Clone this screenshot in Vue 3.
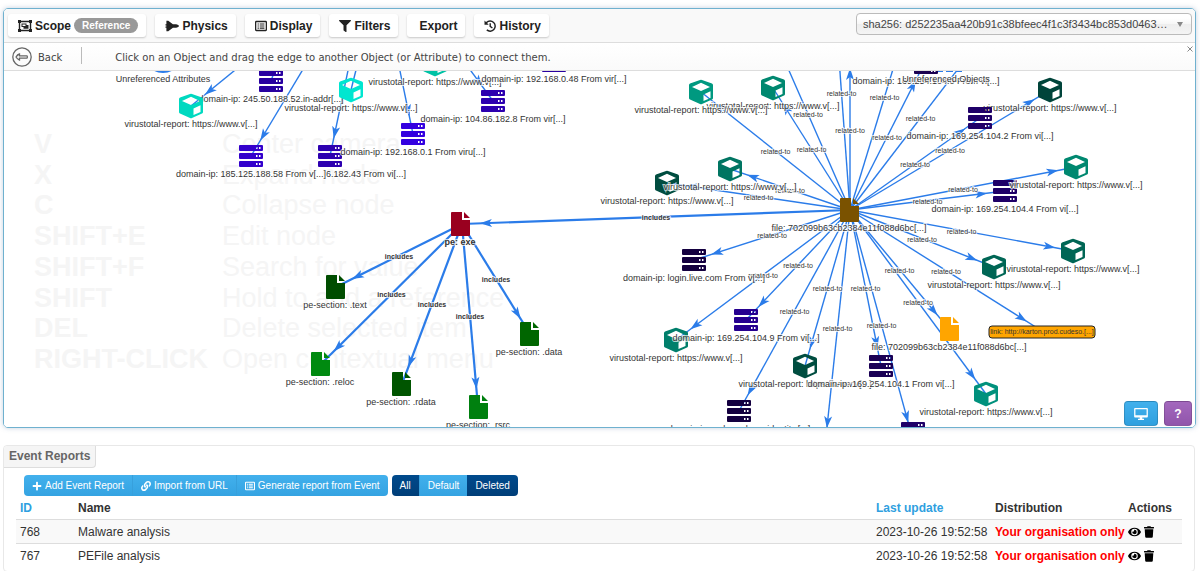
<template>
  <main class="page">
    <section class="graph-panel">
      <!-- Main toolbar -->
      <div class="toolbar">
        <div class="toolbar-menu">
          <button v-for="item in menu" :key="item.label" type="button" class="menu-btn" :class="{ 'no-icon': !item.icon }">
            <svg v-if="item.icon" class="menu-icon" :class="{ wide: item.wide }" :viewBox="icons[item.icon].box">
              <path :d="icons[item.icon].d" fill-rule="evenodd" />
            </svg>
            <span>{{ item.label }}</span>
            <span v-if="item.badge" class="badge">{{ item.badge }}</span>
          </button>
        </div>
        <div class="search">
          <select v-model="selected" class="search-select" aria-label="Search node">
            <option v-for="o in searchOptions" :key="o" :value="o">{{ o }}</option>
          </select>
          <span class="search-arrow"></span>
        </div>
      </div>

      <!-- Edit mode bar -->
      <div class="edit-bar">
        <button type="button" class="back-btn">
          <svg class="back-icon" viewBox="0 0 20 20">
            <circle cx="10" cy="10" r="9.200" />
            <path d="M4 10Q5.500 7.500 7.500 7V8.800H15Q16 10 15 11.200H7.500V13Q5.500 12.500 4 10Z" />
          </svg>
          <span>Back</span>
        </button>
        <span class="separator"></span>
        <span class="edit-hint">Click on an Object and drag the edge to another Object (or Attribute) to connect them.</span>
        <button type="button" class="close-btn" aria-label="Close">
          <svg class="close-icon" viewBox="0 0 6 6"><path d="M0.500 0.500L5.500 5.500M5.500 0.500L0.500 5.500" /></svg>
        </button>
      </div>

      <!-- Network canvas -->
      <div class="canvas">
        <dl class="shortcuts">
          <template v-for="s in shortcuts" :key="s[0]">
            <dt>{{ s[0] }}</dt>
            <dd>{{ s[1] }}</dd>
          </template>
        </dl>

        <svg class="network">
          <g transform="translate(-4 -71)">
            <ellipse cx="163" cy="65" rx="13" ry="8" class="cluster" />
            <path d="M936 71H962" class="cluster-line" />

            <g v-for="(e, i) in edges" :key="'e' + i">
              <line :x1="e.x1" :y1="e.y1" :x2="e.x2" :y2="e.y2" class="edge" :class="{ strong: e.strong }" />
              <path v-if="e.arrow" :d="e.arrow" class="arrow" />
            </g>
            <text
              v-for="(e, i) in labelledEdges"
              :key="'t' + i"
              :x="(e.x1 + e.x2) / 2"
              :y="(e.y1 + e.y2) / 2 + 3"
              class="edge-label"
              :class="{ strong: e.strong }"
            >{{ e.label }}</text>

            <g v-for="(n, i) in nodes" :key="'n' + i">
              <path
                v-if="n.type"
                :d="shapes[n.type]"
                :transform="`translate(${n.x} ${n.y})`"
                :fill="n.color"
                fill-rule="evenodd"
              />
              <text v-if="n.label" :x="n.lx || n.x" :y="n.y + 21" class="node-label" :class="{ strong: n.strong }">{{ n.label }}</text>
            </g>

            <rect x="989" y="326" width="106" height="12" rx="3" class="link-box" />
            <text x="1042" y="334" class="link-label">link: http://karton.prod.cudeso.[...]</text>
          </g>
        </svg>

        <div class="canvas-actions">
          <button type="button" class="action-btn blue" aria-label="Fullscreen">
            <svg class="action-icon" viewBox="0 0 16 14">
              <path d="M1 0H15Q16 0 16 1V10Q16 11 15 11H9.500V12.500H11.500V14H4.500V12.500H6.500V11H1Q0 11 0 10V1Q0 0 1 0ZM1.500 1.500V8.500H14.500V1.500Z" fill-rule="evenodd" />
            </svg>
          </button>
          <button type="button" class="action-btn purple">?</button>
        </div>
      </div>
    </section>

    <!-- Event reports -->
    <section class="reports">
      <h2 class="reports-title">Event Reports</h2>
      <div class="reports-body">
        <div class="report-actions">
          <div class="btn-group">
            <button v-for="b in reportButtons" :key="b.label" type="button" class="group-btn">
              <svg class="group-icon" :viewBox="icons[b.icon].box">
                <path :d="icons[b.icon].d" fill-rule="evenodd" />
              </svg>
              <span>{{ b.label }}</span>
            </button>
          </div>
          <div class="btn-group">
            <button
              v-for="f in filters"
              :key="f"
              type="button"
              class="group-btn"
              :class="{ dark: f !== activeFilter }"
              @click="activeFilter = f"
            >{{ f }}</button>
          </div>
        </div>

        <table class="report-table">
          <thead>
            <tr>
              <th class="col-id"><a href="#">ID</a></th>
              <th>Name</th>
              <th class="col-date"><a href="#">Last update</a></th>
              <th class="col-dist">Distribution</th>
              <th class="col-actions">Actions</th>
            </tr>
          </thead>
          <tbody>
            <tr v-for="r in reports" :key="r.id">
              <td>{{ r.id }}</td>
              <td>{{ r.name }}</td>
              <td>{{ r.date }}</td>
              <td class="restricted">Your organisation only</td>
              <td>
                <div class="row-actions">
                  <button type="button" class="row-btn" aria-label="View">
                    <svg class="eye-icon" :viewBox="icons.eye.box"><path :d="icons.eye.d" /></svg>
                  </button>
                  <button type="button" class="row-btn" aria-label="Delete">
                    <svg class="trash-icon" :viewBox="icons.trash.box"><path :d="icons.trash.d" /></svg>
                  </button>
                </div>
              </td>
            </tr>
          </tbody>
        </table>
      </div>
    </section>
  </main>
</template>

<script setup>
import { ref, computed } from "vue";

const icons = {
  group: {
    box: "0 0 14 12",
    d: "M0 0H3V0.800H11V0H14V3H13.200V9H14V12H11V11.200H3V12H0V9H0.800V3H0ZM3 2.200V3H2.200V9H3V9.800H11V9H11.800V3H11V2.200ZM3.500 3.500H8.500V5H10.500V8.700H5.500V7H3.500ZM4.500 4.500V6H7.500V4.500Z",
  },
  shuttle: {
    box: "0 0 15 12",
    d: "M1.500 0.500H3.500L8.500 4H12Q15 4.700 15 6Q15 7.300 12 8H8.500L3.500 11.500H1.500V8H0.500V6.500H1.500V5.500H0.500V4H1.500Z",
  },
  list: {
    box: "0 0 14 12",
    d: "M1.500 0H12.500Q14 0 14 1.500V10.500Q14 12 12.500 12H1.500Q0 12 0 10.500V1.500Q0 0 1.500 0ZM1.500 1.500V10.500H12.500V1.500ZM3 3H4.500V4.300H3ZM5.500 3H11V4.300H5.500ZM3 5.400H4.500V6.700H3ZM5.500 5.400H11V6.700H5.500ZM3 7.800H4.500V9.100H3ZM5.500 7.800H11V9.100H5.500Z",
  },
  filter: {
    box: "0 0 512 512",
    d: "M487.976 0H24.028C2.710 0-8.047 25.866 7.058 40.971L192 225.941V432c0 7.831 3.821 15.170 10.237 19.662l80 55.980C298.020 518.690 320 507.493 320 487.980V225.941l184.947-184.970C520.021 25.896 509.338 0 487.976 0z",
  },
  history: {
    box: "0 0 12 12",
    d: "M0.500 0.500L2 2A5.800 5.800 0 1 1 2.300 10.500L3.300 9.300A4.300 4.300 0 1 0 3.100 3.100L4.700 4.700H0.500ZM5.500 3.200H6.900V6L8.800 7.500L8 8.500L5.500 6.700Z",
  },
  plus: {
    box: "0 0 448 512",
    d: "M416 208H272V64c0-17.670-14.330-32-32-32h-32c-17.670 0-32 14.330-32 32v144H32c-17.670 0-32 14.330-32 32v32c0 17.670 14.330 32 32 32h144v144c0 17.670 14.330 32 32 32h32c17.670 0 32-14.330 32-32V304h144c17.670 0 32-14.330 32-32v-32c0-17.670-14.330-32-32-32z",
  },
  link: {
    box: "0 0 512 512",
    d: "M326.612 185.391c59.747 59.809 58.927 155.698.36 214.590-.11.12-.24.25-.36.37l-67.200 67.200c-59.270 59.270-155.699 59.262-214.960 0-59.270-59.260-59.270-155.700 0-214.960l37.106-37.106c9.840-9.840 26.786-3.300 27.294 10.606.648 17.722 3.826 35.527 9.690 52.721 1.986 5.822.567 12.262-3.783 16.612l-13.087 13.087c-28.026 28.026-28.905 73.660-1.155 101.960 28.024 28.579 74.086 28.749 102.325.51l67.200-67.190c28.191-28.191 28.073-73.757 0-101.830-3.701-3.694-7.429-6.564-10.341-8.569a16.037 16.037 0 0 1-6.947-12.606c-.396-10.567 3.348-21.456 11.698-29.806l21.054-21.055c5.521-5.521 14.182-6.199 20.584-1.731a152.482 152.482 0 0 1 20.522 17.197zM467.547 44.449c-59.261-59.262-155.690-59.270-214.960 0l-67.200 67.200c-.12.12-.25.25-.36.37-58.566 58.892-59.387 154.781.36 214.590a152.454 152.454 0 0 0 20.521 17.196c6.402 4.468 15.064 3.789 20.584-1.731l21.054-21.055c8.350-8.350 12.094-19.239 11.698-29.806a16.037 16.037 0 0 0-6.947-12.606c-2.912-2.005-6.640-4.875-10.341-8.569-28.073-28.073-28.191-73.639 0-101.830l67.200-67.190c28.239-28.239 74.300-28.069 102.325.51 27.750 28.300 26.872 73.934-1.155 101.960l-13.087 13.087c-4.350 4.350-5.769 10.790-3.783 16.612 5.864 17.194 9.042 34.999 9.690 52.721.509 13.906 17.454 20.446 27.294 10.606l37.106-37.106c59.271-59.259 59.271-155.699.001-214.959z",
  },
  eye: {
    box: "0 0 576 512",
    d: "M572.520 241.400C518.290 135.590 410.930 64 288 64S57.680 135.640 3.480 241.410a32.350 32.350 0 0 0 0 29.190C57.710 376.410 165.070 448 288 448s230.320-71.640 284.520-177.410a32.350 32.350 0 0 0 0-29.190zM288 400a144 144 0 1 1 144-144 143.930 143.930 0 0 1-144 144zm0-240a95.310 95.310 0 0 0-25.310 3.790 47.850 47.850 0 0 1-66.900 66.900A95.780 95.780 0 1 0 288 160z",
  },
  trash: {
    box: "0 0 448 512",
    d: "M432 32H312l-9.400-18.700A24 24 0 0 0 281.100 0H166.800a23.720 23.720 0 0 0-21.400 13.300L136 32H16A16 16 0 0 0 0 48v32a16 16 0 0 0 16 16h416a16 16 0 0 0 16-16V48a16 16 0 0 0-16-16zM53.200 467a48 48 0 0 0 47.900 45h245.800a48 48 0 0 0 47.900-45L416 128H32z",
  },
};

const menu = [
  { label: "Scope", icon: "group", badge: "Reference", wide: true },
  { label: "Physics", icon: "shuttle", wide: true },
  { label: "Display", icon: "list" },
  { label: "Filters", icon: "filter" },
  { label: "Export" },
  { label: "History", icon: "history" },
];

const searchOptions = ["sha256: d252235aa420b91c38bfeec4f1c3f3434bc853d0463…"];
const selected = ref(searchOptions[0]);

const shortcuts = [
  ["V", "Center camera"],
  ["X", "Expand node"],
  ["C", "Collapse node"],
  ["SHIFT+E", "Edit node"],
  ["SHIFT+F", "Search for value"],
  ["SHIFT", "Hold to add a reference"],
  ["DEL", "Delete selected item"],
  ["RIGHT-CLICK", "Open contextual menu"],
];

// Node glyphs, drawn around their own centre
const bar = (y) =>
  `M-11 ${y}H11Q12 ${y} 12 ${y + 1}V${y + 5}Q12 ${y + 6} 11 ${y + 6}H-11Q-12 ${y + 6} -12 ${y + 5}V${y + 1}Q-12 ${y} -11 ${y}Z` +
  `M5 ${y + 2}H6.500V${y + 4}H5ZM8 ${y + 2}H9.500V${y + 4}H8Z`;
const shapes = {
  server: bar(-11) + bar(-3) + bar(5),
  cube: "M-1 -12Q0 -12.500 1 -12L11 -8.500Q12 -8 12 -7V6Q12 7 11 7.500L1 12Q0 12.500 -1 12L-11 7.500Q-12 7 -12 6V-7Q-12 -8 -11 -8.500ZM0 -9.200L-9 -5L0 -1L9 -5ZM2.500 2.500V9L9.500 6V-0.800Z",
  file: "M-8 -12H2V-4H10V11Q10 12 9 12H-8Q-9 12 -9 11V-11Q-9 -12 -8 -12ZM4 -12L10 -6H4Z",
};

const VT = "virustotal-report: https://www.v[...]";
const nodes = [
  { x: 163, y: 61, label: "Unreferenced Attributes" },
  { type: "server", x: 271, y: 81, color: "#2800a0", label: "domain-ip: 245.50.188.52.in-addr[...]" },
  { type: "cube", x: 191, y: 106, color: "#00d9c0", label: VT },
  { type: "server", x: 330, y: 156, lx: 366, color: "#2d00b0", label: "6.182.43 From vi[...]" },
  { type: "server", x: 251, y: 156, color: "#3300cc", label: "domain-ip: 185.125.188.58 From v[...]" },
  { type: "server", x: 413, y: 134, color: "#3300e0", label: "domain-ip: 192.168.0.1 From viru[...]" },
  { type: "cube", x: 435, y: 64, color: "#00c2a5", label: VT },
  { type: "cube", x: 351, y: 90, color: "#00e6d0", label: VT },
  { type: "server", x: 554, y: 61, color: "#2800a0", label: "domain-ip: 192.168.0.48 From vir[...]" },
  { type: "server", x: 493, y: 101, color: "#2d00b0", label: "domain-ip: 104.86.182.8 From vir[...]" },
  { type: "cube", x: 773, y: 88, color: "#008870", label: VT },
  { type: "cube", x: 701, y: 92, color: "#009980", label: VT },
  { type: "cube", x: 667, y: 183, color: "#004d40", label: VT },
  { type: "cube", x: 730, y: 169, color: "#007562", label: VT },
  { type: "server", x: 926, y: 63, color: "#1a0050", label: "domain-ip: 169.254.104.0 From vi[...]" },
  { x: 946, y: 61, label: "Unreferenced Objects" },
  { type: "cube", x: 1050, y: 90, color: "#00443a", label: VT },
  { type: "server", x: 980, y: 118, color: "#1f0068", label: "domain-ip: 169.254.104.2 From vi[...]" },
  { type: "server", x: 1005, y: 191, color: "#1f0068", label: "domain-ip: 169.254.104.4 From vi[...]" },
  { type: "cube", x: 1076, y: 167, color: "#008870", label: VT },
  { type: "file", x: 849, y: 210, color: "#7a5200", label: "file: 702099b63cb2384e11f088d6bc[...]" },
  { type: "file", x: 460, y: 224, color: "#99001f", label: "pe: exe", strong: true },
  { type: "cube", x: 1073, y: 251, color: "#006655", label: VT },
  { type: "cube", x: 994, y: 267, color: "#006655", label: VT },
  { type: "server", x: 694, y: 260, color: "#140040", label: "domain-ip: login.live.com From v[...]" },
  { type: "cube", x: 676, y: 340, color: "#007f6b", label: VT },
  { type: "server", x: 746, y: 320, color: "#260090", label: "domain-ip: 169.254.104.9 From vi[...]" },
  { type: "file", x: 949, y: 329, color: "#ffa500", label: "file: 702099b63cb2384e11f088d6bc[...]" },
  { type: "cube", x: 805, y: 366, color: "#004d40", label: VT },
  { type: "server", x: 881, y: 366, color: "#1a0055", label: "domain-ip: 169.254.104.1 From vi[...]" },
  { type: "cube", x: 986, y: 394, color: "#00917d", label: VT },
  { type: "server", x: 913, y: 433, color: "#1f0068" },
  { type: "server", x: 739, y: 411, color: "#140040", label: "domain-ip: prda.aadg.msidentity.[...]" },
  { type: "file", x: 335, y: 287, color: "#004d00", label: "pe-section: .text" },
  { type: "file", x: 320, y: 364, color: "#008a10", label: "pe-section: .reloc" },
  { type: "file", x: 401, y: 384, color: "#005500", label: "pe-section: .rdata" },
  { type: "file", x: 478, y: 407, color: "#00800f", label: "pe-section: .rsrc" },
  { type: "file", x: 529, y: 334, color: "#006600", label: "pe-section: .data" },
];

const hub = [850, 210];
const pe = [462, 224];

// Targets of the hub, some of them out of view
const hubTargets = [
  [833, -24], [850, 50], [919, -16], [991, 26], [924, 64], [1050, 90], [980, 118], [1076, 167], [1005, 191],
  [1073, 251], [994, 267], [1042, 331], [949, 329], [986, 394], [881, 366], [913, 440], [825, 446], [805, 366],
  [739, 411], [746, 320], [676, 340], [694, 260], [667, 183], [730, 169], [701, 92], [773, 88], [766, 18],
];
const peTargets = [[336, 287], [321, 364], [402, 384], [478, 407], [530, 334]];
const outerEdges = [
  [[283, 31], [191, 106]],
  [[320, 41], [251, 156]],
  [[354, 42], [330, 156]],
  [[361, 50], [351, 90]],
  [[394, 42], [413, 134]],
  [[449, 41], [493, 101]],
  [[285, 41], [271, 81]],
];

const makeEdge = (from, to, label, strong = false, arrow = true) => {
  const len = Math.hypot(to[0] - from[0], to[1] - from[1]);
  const ux = (to[0] - from[0]) / len;
  const uy = (to[1] - from[1]) / len;
  // point along the edge, "back" px before the target and "side" px off it
  const at = (back, side) => `${to[0] - ux * back - uy * side} ${to[1] - uy * back + ux * side}`;
  return {
    x1: from[0],
    y1: from[1],
    x2: to[0],
    y2: to[1],
    label,
    strong,
    arrow: arrow ? `M${at(18, 0)}L${at(30, 4)}L${at(27, 0)}L${at(30, -4)}Z` : "",
  };
};

const edges = computed(() => [
  ...outerEdges.map(([a, b], i) => makeEdge(a, b, "", false, i !== 3 && i !== 6)),
  ...hubTargets.map((t) => makeEdge(hub, t, "related-to")),
  makeEdge(hub, pe, "includes", true),
  ...peTargets.map((t) => makeEdge(pe, t, "includes", true)),
]);
const labelledEdges = computed(() => edges.value.filter((e) => e.label));

const reportButtons = [
  { label: "Add Event Report", icon: "plus" },
  { label: "Import from URL", icon: "link" },
  { label: "Generate report from Event", icon: "list" },
];
const filters = ["All", "Default", "Deleted"];
const activeFilter = ref("Default");

const reports = [
  { id: 768, name: "Malware analysis", date: "2023-10-26 19:52:58" },
  { id: 767, name: "PEFile analysis", date: "2023-10-26 19:52:58" },
];
</script>

<style>
body {
  background-color: #fff;
}
</style>

<style scoped>
.page {
  padding: 8px 4px 0 3px;
  font-family: "Liberation Sans", Arial, sans-serif;
  font-size: 12px;
  line-height: 16px;
  color: #333;
}

button {
  margin: 0;
  font-family: inherit;
  cursor: pointer;
}

.graph-panel {
  border: 1px solid #6fb1cf;
  border-radius: 5px;
  box-shadow: 0 0 5px rgba(90, 120, 160, 0.35);
  overflow: hidden;
}

/* toolbar */
.toolbar {
  display: flex;
  justify-content: space-between;
  align-items: center;
  height: 33px;
  padding: 0 3px 0 4px;
  background-color: #f9f9f9;
  border-bottom: 1px solid #ddd;
}

.toolbar-menu {
  display: flex;
  gap: 9px;
}

.menu-btn {
  display: flex;
  align-items: center;
  gap: 3px;
  height: 23px;
  padding: 0 8px 0 10px;
  border: none;
  border-radius: 3px;
  background-color: #fff;
  box-shadow: 0 1px 2px rgba(0, 0, 0, 0.2);
  font-size: 12px;
  font-weight: bold;
  color: #222;
}

.menu-btn.no-icon {
  padding-left: 12px;
}

.menu-icon {
  width: 12px;
  height: 12px;
  fill: #222;
}

.menu-icon.wide {
  width: 14px;
}

.badge {
  padding: 0 8px;
  border-radius: 8px;
  background-color: #999;
  font-size: 10px;
  line-height: 15px;
  color: #fff;
}

.search {
  position: relative;
  display: flex;
  margin-bottom: 4px;
}

.search-select {
  width: 336px;
  height: 22px;
  padding: 0 20px 0 6px;
  appearance: none;
  border: 1px solid #bbb;
  border-radius: 4px;
  background: linear-gradient(#fff 20%, #f6f6f6 50%, #eee 52%, #f4f4f4 100%);
  font-family: inherit;
  font-size: 11px;
  color: #444;
}

.search-arrow {
  position: absolute;
  top: 9px;
  right: 9px;
  border: 3px solid transparent;
  border-top: 5px solid #888;
  border-bottom: none;
  pointer-events: none;
}

/* edit bar */
.edit-bar {
  display: flex;
  align-items: center;
  height: 27px;
  padding: 0 2px 0 8px;
  border-bottom: 1px solid #ddd;
  background: linear-gradient(#fff, #fafafa);
  font-family: "DejaVu Sans", Verdana, sans-serif;
  font-size: 10px;
  color: #444;
}

.back-btn {
  display: flex;
  align-items: center;
  gap: 6px;
  padding: 0;
  border: none;
  background: none;
  font-size: 10px;
  line-height: 16px;
  color: #444;
}

.back-icon {
  width: 20px;
  height: 20px;
  fill: none;
  stroke: #666;
  stroke-width: 1.3;
}

.separator {
  width: 1px;
  height: 17px;
  margin: 0 33px 3px 19px;
  background-color: #bbb;
}

.back-btn span,
.edit-hint {
  padding-top: 2px;
}

.edit-hint {
  flex: 1;
}

.close-btn {
  display: flex;
  align-self: flex-start;
  margin-top: 3px;
  padding: 0;
  border: none;
  background: none;
}

.close-icon {
  width: 6px;
  height: 6px;
  fill: none;
  stroke: #888;
}

/* canvas */
.canvas {
  position: relative;
  height: 356px;
  overflow: hidden;
  background-color: #fff;
}

.shortcuts {
  position: absolute;
  top: 58px;
  left: 30px;
  display: grid;
  grid-template-columns: 188px auto;
  align-content: space-between;
  height: 245px;
  margin: 0;
  font-size: 27px;
  line-height: 30px;
  color: #f5f5f5;
  white-space: nowrap;
}

.shortcuts dt {
  font-weight: bold;
}

.shortcuts dd {
  margin: 0;
}

.network {
  position: absolute;
  top: 0;
  left: 0;
  width: 100%;
  height: 100%;
}

.cluster {
  fill: #2b7ce9;
}

.cluster-line {
  stroke: #2b7ce9;
  stroke-width: 2;
  stroke-dasharray: 7 3;
}

.edge {
  stroke: #2b7ce9;
  stroke-width: 1.4;
}

.edge.strong {
  stroke-width: 2.2;
}

.arrow {
  fill: #2b7ce9;
}

.edge-label,
.node-label {
  text-anchor: middle;
  paint-order: stroke;
  stroke: rgba(255, 255, 255, 0.7);
  stroke-width: 2px;
  fill: #343434;
}

.edge-label {
  font-size: 7px;
}

.node-label {
  font-size: 9px;
}

.edge-label.strong,
.node-label.strong {
  font-weight: bold;
}

.link-box {
  fill: #ffa500;
  stroke: #222;
}

.link-label {
  text-anchor: middle;
  font-size: 7px;
  fill: #343434;
}

.canvas-actions {
  position: absolute;
  right: 3px;
  bottom: 1px;
  display: flex;
  gap: 6px;
}

.action-btn {
  display: flex;
  align-items: center;
  justify-content: center;
  width: 34px;
  height: 25px;
  padding: 0;
  border: 1px solid rgba(0, 0, 0, 0.15);
  border-radius: 4px;
  font-size: 12px;
  font-weight: bold;
  color: #fff;
}

.action-btn.blue {
  background: linear-gradient(#42b0ec, #2fa0df);
}

.action-btn.purple {
  width: 28px;
  background: linear-gradient(#a368bd, #9155ab);
}

.action-icon {
  width: 14px;
  height: 12px;
  fill: #fff;
}

/* event reports */
.reports {
  margin-top: 17px;
  margin-right: 1px;
  border: 1px solid #e8e8e8;
  border-radius: 4px;
}

.reports-title {
  width: fit-content;
  margin: 0;
  padding: 2px 5px 3px 5px;
  border-right: 1px solid #ddd;
  border-bottom: 1px solid #ddd;
  border-radius: 4px 0 4px 0;
  background-color: #f5f5f5;
  font-size: 12px;
  line-height: 16px;
  color: #666;
}

.reports-body {
  padding: 7px 12px 4px;
}

.report-actions {
  display: flex;
  gap: 4px;
  padding-left: 8px;
}

.btn-group {
  display: flex;
  border-radius: 4px;
  overflow: hidden;
}

.group-btn {
  display: flex;
  align-items: center;
  gap: 3px;
  height: 21px;
  padding: 0 8px;
  border: none;
  background: linear-gradient(#42b0ec, #34a3e2);
  font-size: 10px;
  color: #fff;
}

.group-btn + .group-btn {
  border-left: 1px solid #37a0dc;
}

.group-btn.dark {
  border-left: none;
  background: linear-gradient(#004a8c, #003e78);
}

.group-icon {
  width: 10px;
  height: 10px;
  fill: #fff;
}

.report-table {
  width: 100%;
  border-collapse: collapse;
  table-layout: fixed;
}

.report-table th {
  height: 23px;
  padding: 0 4px;
  text-align: left;
}

.report-table td {
  height: 23px;
  padding: 0 4px;
  border-top: 1px solid #ddd;
  white-space: nowrap;
}

.report-table tbody tr:nth-child(odd) {
  background-color: #f9f9f9;
}

.report-table a {
  color: #2f9fe0;
  text-decoration: none;
}

.col-id {
  width: 50px;
}

.col-date {
  width: 111px;
}

.col-dist {
  width: 125px;
}

.col-actions {
  width: 50px;
}

.report-table .restricted {
  font-weight: bold;
  color: #f00;
}

.row-actions {
  display: flex;
  align-items: center;
  gap: 3px;
}

.row-btn {
  display: flex;
  padding: 0;
  border: none;
  background: none;
}

.eye-icon {
  width: 13px;
  height: 12px;
}

.trash-icon {
  width: 10px;
  height: 12px;
}
</style>
